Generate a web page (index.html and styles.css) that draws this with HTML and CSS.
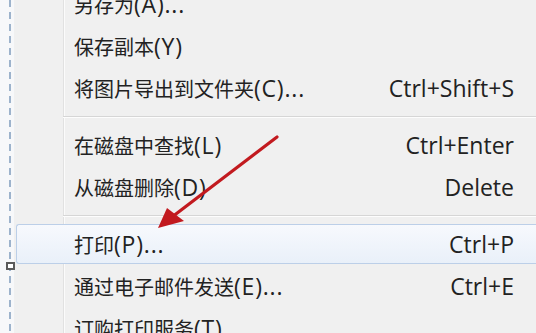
FILE: index.html
```html
<!DOCTYPE html>
<html lang="zh-CN">
<head>
<meta charset="utf-8">
<title>菜单</title>
<link rel="stylesheet" href="styles.css">
</head>
<body>
<div class="screen">
  <div class="strip"><div class="dash"></div></div>
  <div class="menu">
    <div class="item"><span class="label">另存为<span class="lat">(A)...</span></span></div>
    <div class="item"><span class="label">保存副本<span class="lat">(Y)</span></span></div>
    <div class="item"><span class="label">将图片导出到文件夹<span class="lat">(C)...</span></span><span class="key">Ctrl+Shift+S</span></div>
    <div class="sep"></div>
    <div class="item"><span class="label">在磁盘中查找<span class="lat">(L)</span></span><span class="key">Ctrl+Enter</span></div>
    <div class="item"><span class="label">从磁盘删除<span class="lat">(D)</span></span><span class="key">Delete</span></div>
    <div class="sep"></div>
    <div class="item hl"><span class="label">打印<span class="lat">(P)...</span></span><span class="key">Ctrl+P</span></div>
    <div class="item"><span class="label">通过电子邮件发送<span class="lat">(E)...</span></span><span class="key">Ctrl+E</span></div>
    <div class="item"><span class="label">订购打印服务<span class="lat">(T)...</span></span></div>
  </div>
  <span class="handle"></span>
  <svg class="arrow" width="536" height="333" viewBox="0 0 536 333">
    <line x1="277" y1="137" x2="172" y2="217" stroke="#c21a1f" stroke-width="3.2" stroke-linecap="round"/>
    <polygon points="158,228 167,208 184,221" fill="#c21a1f"/>
  </svg>
</div>
</body>
</html>
```

FILE: styles.css
```css
html, body {
  margin: 0;
  padding: 0;
  background: #ffffff;
}
.screen {
  position: relative;
  width: 536px;
  height: 333px;
  overflow: hidden;
  display: flex;
  font-family: "Noto Sans CJK SC", "Open Sans", sans-serif;
  color: #222222;
}
.strip {
  width: 14px;
  flex: none;
  background: #f7f8fa;
  position: relative;
}
.dash {
  position: absolute;
  left: 9px;
  top: 0;
  width: 2px;
  height: 100%;
  background: repeating-linear-gradient(to bottom, #9db3cc 0 7px, transparent 7px 12px);
}
.menu {
  flex: 1;
  margin-top: -17px;
  display: flex;
  flex-direction: column;
  background:
    linear-gradient(to right, transparent 49px, #e1e1e1 49px, #e1e1e1 50px, #fbfbfb 50px, #fbfbfb 51px, transparent 51px),
    #f0f0f0;
}
.item {
  height: 42px;
  flex: none;
  box-sizing: border-box;
  display: flex;
  align-items: center;
  justify-content: space-between;
  padding: 0 22px 0 60px;
}
.label {
  font-size: 20px;
  white-space: nowrap;
}
.lat {
  font-family: "Open Sans", sans-serif;
  font-size: 23px;
  letter-spacing: 0.8px;
}
.key {
  font-family: "Open Sans", sans-serif;
  font-size: 23px;
  white-space: nowrap;
}
.item.hl {
  height: 40px;
  margin: 1px 0 1px 2px;
  padding-left: 57px;
  border: 1px solid #bccfe8;
  border-right: none;
  border-radius: 3px 0 0 3px;
  background: linear-gradient(to bottom, #f7f9fd, #e9f0f9);
}
.sep {
  height: 15px;
  flex: none;
  position: relative;
}
.sep::after {
  content: "";
  position: absolute;
  left: 49px;
  right: 0;
  top: 7px;
  height: 1px;
  background: #d6d6d6;
  border-bottom: 1px solid #fdfdfd;
}
.handle {
  position: absolute;
  left: 6px;
  top: 262px;
  width: 5px;
  height: 4px;
  border: 2px solid #5a5a5a;
  background: #ffffff;
}
.arrow {
  position: absolute;
  left: 0;
  top: 0;
}
```
